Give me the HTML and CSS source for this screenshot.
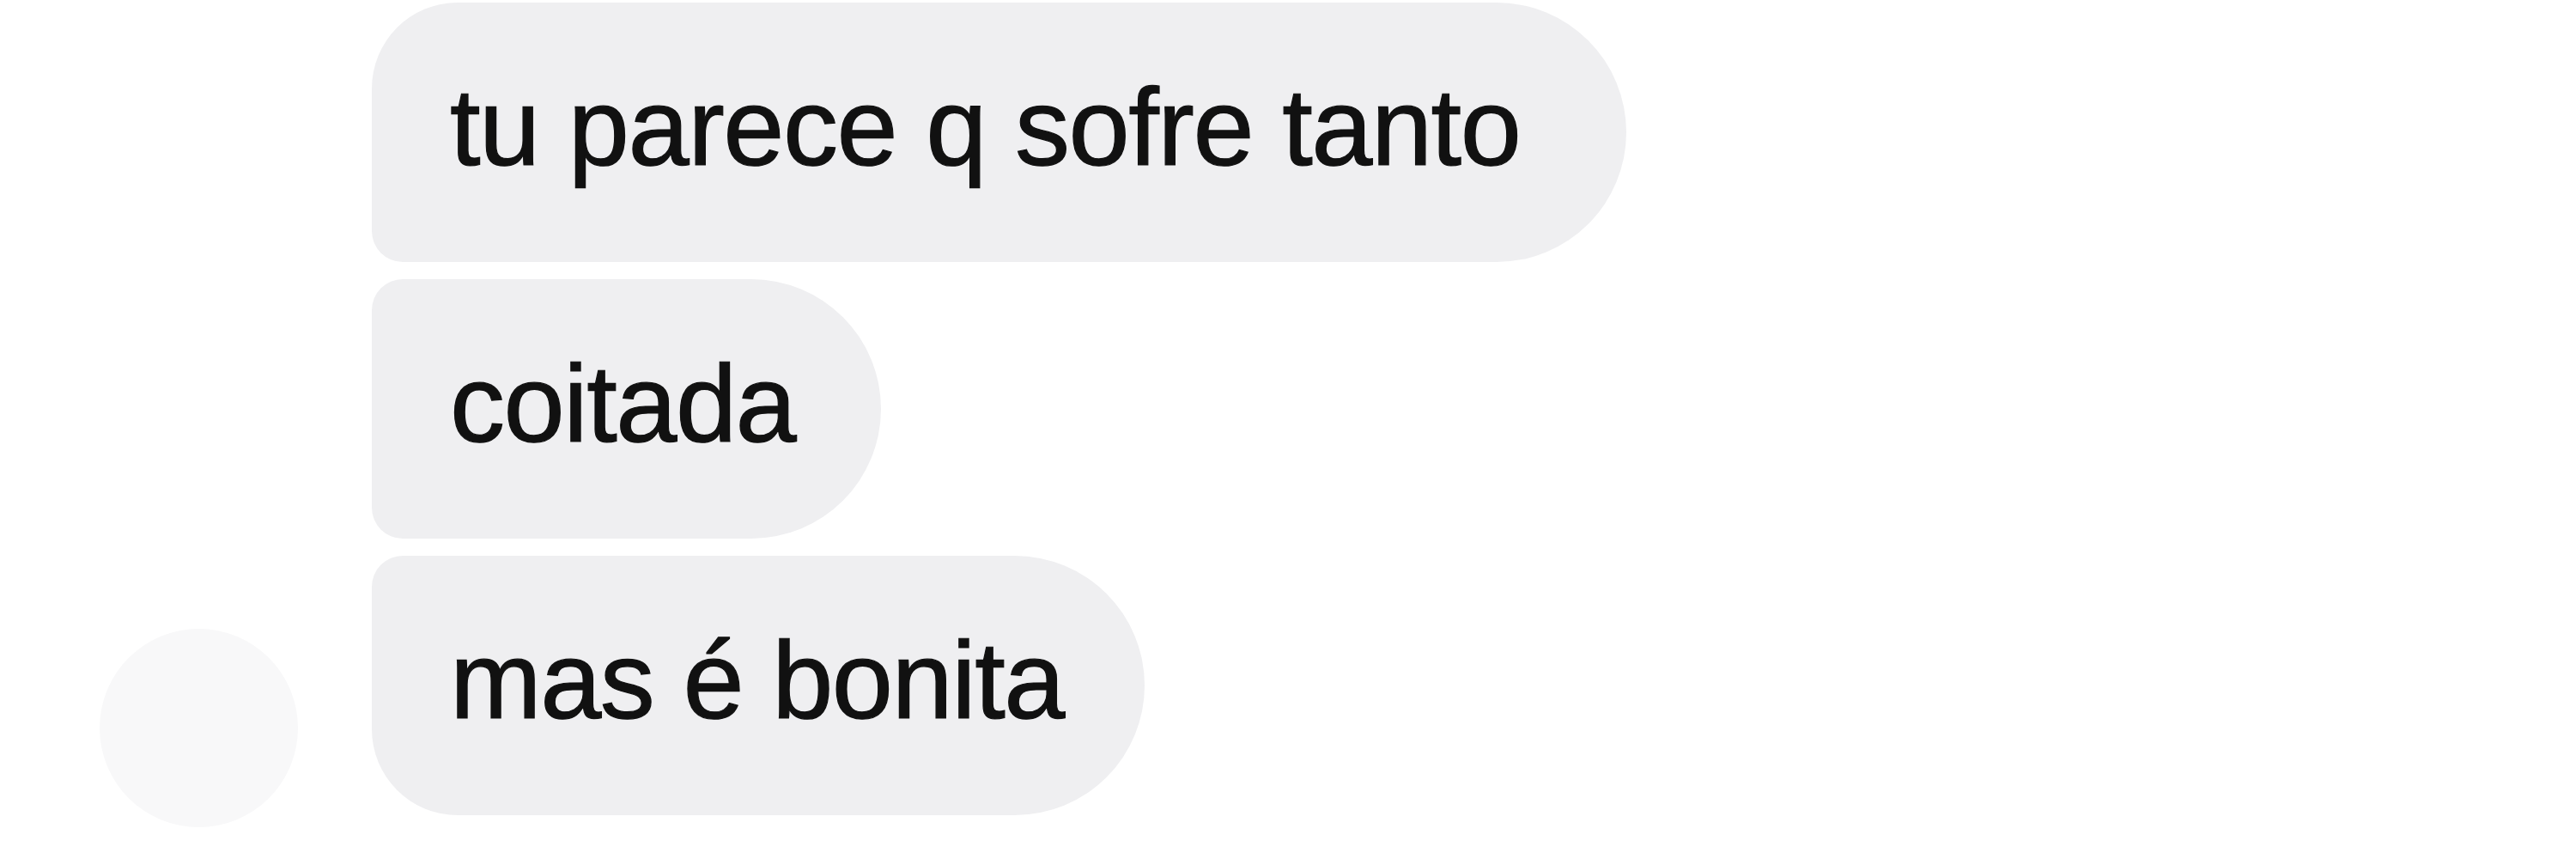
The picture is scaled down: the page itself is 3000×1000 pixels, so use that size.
FILE: index.html
```html
<!DOCTYPE html>
<html lang="pt">
<head>
<meta charset="utf-8">
<title>Mensagens</title>
<link rel="stylesheet" href="styles.css">
</head>
<body>
<main class="thread">
  <div class="group">
    <div class="avatar-col">
      <div class="avatar"></div>
    </div>
    <div class="bubbles">
      <div class="bubble first"><span class="text">tu parece q sofre tanto</span></div>
      <div class="bubble middle"><span class="text">coitada</span></div>
      <div class="bubble last"><span class="text">mas é bonita</span></div>
    </div>
  </div>
</main>
</body>
</html>
```
FILE: styles.css
```css
html, body {
  margin: 0;
  padding: 0;
  background: #ffffff;
}

body {
  width: 3000px;
  height: 1000px;
  overflow: hidden;
  font-family: "Liberation Sans", Arial, Helvetica, sans-serif;
  color: #111111;
  text-rendering: geometricPrecision;
}

.thread {
  padding-top: 3px;
}

.group {
  display: flex;
  align-items: flex-end;
  gap: 86px;
  padding-left: 116px;
}

.avatar-col {
  display: flex;
  align-items: flex-end;
  margin-bottom: -14px;
}

.avatar {
  width: 231px;
  height: 231px;
  border-radius: 50%;
  background: #f8f8f9;
}

.bubbles {
  display: flex;
  flex-direction: column;
  align-items: flex-start;
  gap: 20px;
}

.bubble {
  box-sizing: border-box;
  height: 302px;
  padding: 0 100px 10px 91px;
  background: #efeff1;
  border-radius: 36px 151px 151px 36px;
  white-space: nowrap;
}

.bubble.first {
  border-top-left-radius: 100px;
  padding-right: 124px;
}

.bubble.last {
  border-bottom-left-radius: 100px;
  padding-right: 94px;
}

.text {
  display: block;
  font-size: 128px;
  line-height: 292px;
  letter-spacing: -1.5px;
  -webkit-text-stroke: 1.2px #111111;
}
```
